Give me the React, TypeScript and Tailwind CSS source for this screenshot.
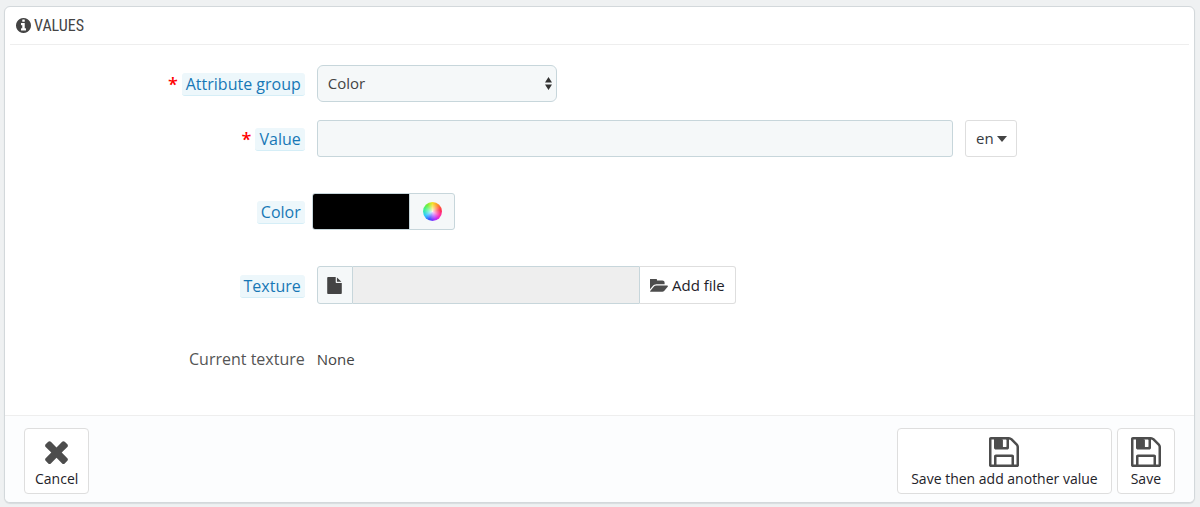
import React, { useState } from 'react';

const InfoIcon = ({ className }: { className: string }) => (
    <svg viewBox="128 128 1536 1536" fill="currentColor" className={className} aria-hidden="true">
        <path d="M1152 1376v-160q0-14-9-23t-23-9h-96v-512q0-14-9-23t-23-9h-320q-14 0-23 9t-9 23v160q0 14 9 23t23 9h96v320h-96q-14 0-23 9t-9 23v160q0 14 9 23t23 9h448q14 0 23-9t9-23zm-128-896v-160q0-14-9-23t-23-9h-192q-14 0-23 9t-9 23v160q0 14 9 23t23 9h192q14 0 23-9t9-23zm640 416q0 209-103 385.5t-279.5 279.5-385.5 103-385.5-103-279.5-279.5-103-385.5 103-385.5 279.5-279.5 385.5-103 385.5 103 279.5 279.5 103 385.5z" />
    </svg>
);

const FileIcon = ({ className }: { className: string }) => (
    <svg viewBox="128 0 1536 1792" fill="currentColor" className={className} aria-hidden="true">
        <path d="M1152 512v-472q22 14 36 28l408 408q14 14 28 36h-472zm-128 32q0 40 28 68t68 28h544v1056q0 40-28 68t-68 28h-1344q-40 0-68-28t-28-68v-1600q0-40 28-68t68-28h800v544z" />
    </svg>
);

const FolderOpenIcon = ({ className }: { className: string }) => (
    <svg viewBox="0 256 1815 1280" fill="currentColor" className={className} aria-hidden="true">
        <path d="M1815 952q0 31-31 66l-336 396q-43 51-120.5 86.5t-143.5 35.5h-1088q-34 0-60.5-13t-26.5-43q0-31 31-66l336-396q43-51 120.5-86.5t143.5-35.5h1088q34 0 60.5 13t26.5 43zm-343-344v160h-832q-94 0-197 47.5t-164 119.5l-337 396-5 6q0-4-.5-12.5t-.5-12.5v-960q0-92 66-158t158-66h320q92 0 158 66t66 158v32h544q92 0 158 66t66 158z" />
    </svg>
);

const CrossIcon = ({ className }: { className: string }) => (
    <svg viewBox="302 302 1188 1252" fill="currentColor" className={className} aria-hidden="true">
        <path d="M1490 1322q0 40-28 68l-136 136q-28 28-68 28t-68-28l-294-294-294 294q-28 28-68 28t-68-28l-136-136q-28-28-28-68t28-68l294-294-294-294q-28-28-28-68t28-68l136-136q28-28 68-28t68 28l294 294 294-294q28-28 68-28t68 28l136 136q28 28 28 68t-28 68l-294 294 294 294q28 28 28 68z" />
    </svg>
);

const SaveIcon = ({ className }: { className: string }) => (
    <svg viewBox="128 128 1536 1536" fill="currentColor" className={className} aria-hidden="true">
        <path d="M512 1536h768v-384h-768v384zm896 0h128v-896q0-14-10-38.5t-20-34.5l-281-281q-10-10-34-20t-39-10v416q0 40-28 68t-68 28h-576q-40 0-68-28t-28-68v-416h-128v1280h128v-416q0-40 28-68t68-28h832q40 0 68 28t28 68v416zm-384-928v-320q0-13-9.5-22.5t-22.5-9.5h-192q-13 0-22.5 9.5t-9.5 22.5v320q0 13 9.5 22.5t22.5 9.5h192q13 0 22.5-9.5t9.5-22.5zm640 32v928q0 40-28 68t-68 28h-1344q-40 0-68-28t-28-68v-1344q0-40 28-68t68-28h928q40 0 88 20t76 48l280 280q28 28 48 76t20 88z" />
        <path d="M540 250h300v400h-300z" />
    </svg>
);

const FormRow = ({
    label,
    htmlFor,
    required,
    children
}: {
    label: string,
    htmlFor: string,
    required?: boolean,
    children: React.ReactNode
}) => {

    return (
        <div className="flex items-center">
            <div className="flex w-1/4 shrink-0 justify-end gap-1 pt-0.5 text-base leading-[22px]">
                {required && <span className="text-lg leading-[22px] font-semibold text-[#ff0000]">*</span>}
                <label htmlFor={htmlFor} className="rounded-[3px] border-b border-[#d5eef7] bg-[#edf7fb] px-1 text-[#1777b6]">
                    {label}
                </label>
            </div>
            {children}
        </div>
    )
}

const FooterButton = ({
    text,
    padding,
    submit,
    children
}: {
    text: string,
    padding: string,
    submit?: boolean,
    children: React.ReactNode
}) => {

    return (
        <button type={submit ? 'submit' : 'button'} className={`flex h-[66px] flex-col items-center justify-between rounded border border-[#dedede] bg-white pt-2 pb-1 text-sm leading-5 text-[#1e2229] hover:bg-gray-50 ${padding}`}>
            <span className="flex h-[30px] items-center text-[#4d4d4d]">{children}</span>
            {text}
        </button>
    )
}

const App = () => {
    const [group, setGroup] = useState('color');
    const [value, setValue] = useState('');
    const [color, setColor] = useState('#000000');

    return (
        <div className="min-h-screen bg-[#eff1f2] pt-1.5 pr-[5px] pb-1 pl-1 font-['Open_Sans',sans-serif] text-[15px] text-[#444444]">
            <form className="overflow-hidden rounded-md border border-[#d3d8db] bg-white shadow-[0_1px_1px_#d8dcde]">
                <h3 className="mx-[5px] flex h-[38px] items-center gap-[3px] border-b border-[#eeeeee] px-1.5 font-['Ubuntu_Condensed','Roboto_Condensed','Open_Sans_Condensed',sans-serif] text-base text-[#444444]">
                    <InfoIcon className="h-[15px] w-[15px]" />
                    VALUES
                </h3>

                <div className="mx-[5px] pt-5 pb-11">
                    <FormRow label="Attribute group" htmlFor="attribute-group" required>
                        <div className="relative ml-3 w-60">
                            <select id="attribute-group" value={group} onChange={(e) => setGroup(e.target.value)} className="block h-[37px] w-full appearance-none rounded-md border border-[#c7d6db] bg-[#f5f8f9] px-[10px] text-[15px] text-[#444444]">
                                <option value="color">Color</option>
                                <option value="size">Size</option>
                            </select>
                            <svg viewBox="0 0 7 13" fill="#333333" className="pointer-events-none absolute top-3 right-[5px] h-[13px] w-[7px]" aria-hidden="true">
                                <path d="M3.5 0 7 5.4H0zM0 7.6h7L3.5 13z" />
                            </svg>
                        </div>
                    </FormRow>

                    <div className="mt-[18px]">
                        <FormRow label="Value" htmlFor="value" required>
                            <input id="value" type="text" value={value} onChange={(e) => setValue(e.target.value)} className="ml-3 h-[37px] w-[54%] rounded-[3px] border border-[#c7d6db] bg-[#f5f8f9] px-2" />
                            <button type="button" className="ml-3 flex h-[37px] w-[52px] items-center justify-center gap-[3px] rounded-[3px] border border-[#dedede] bg-white text-[15px] text-[#363a41]">
                                en
                                <svg viewBox="0 0 10 6" fill="#444444" className="h-1.5 w-[10px]" aria-hidden="true">
                                    <path d="M0 0h10L5 6z" />
                                </svg>
                            </button>
                        </FormRow>
                    </div>

                    <div className="mt-9">
                        <FormRow label="Color" htmlFor="color">
                            <div className="ml-[7px] flex h-[37px] w-[143px] overflow-hidden rounded-[3px] border border-[#c7d6db] bg-[#f5f8f9]">
                                <input id="color" type="text" value={color} onChange={(e) => setColor(e.target.value)} className="w-24 bg-black px-2 text-black" />
                                <button type="button" aria-label="Pick a color" className="flex flex-1 items-center justify-center border-l border-[#c7d6db] pl-0.5">
                                    <span className="h-[19px] w-[19px] rounded-full bg-[radial-gradient(circle,#ffffffdd_0%,#ffffff55_35%,#ffffff00_60%),conic-gradient(#f5e02a,#ff8a2a,#ff2f4f,#ff2fb0,#b52fff,#3f4dff,#2fc8ff,#3cf0a0,#6df03a,#f5e02a)]" />
                                </button>
                            </div>
                        </FormRow>
                    </div>

                    <div className="mt-9">
                        <FormRow label="Texture" htmlFor="texture">
                            <div className="ml-3 flex h-[38px] w-[419px]">
                                <span className="flex w-9 items-center justify-center rounded-l-[3px] border border-[#c7d6db] bg-[#f5f8f9]">
                                    <FileIcon className="h-[17px] w-[15px]" />
                                </span>
                                <input id="texture" type="text" readOnly className="min-w-0 flex-1 border-y border-[#c7d6db] bg-[#eeeeee] px-2" />
                                <button type="button" className="flex items-center gap-1 rounded-r-[3px] border border-[#dedede] border-l-[#c7d6db] bg-white px-[10px] text-[15px] text-[#1e2229]">
                                    <FolderOpenIcon className="h-[13px] w-[18px] text-[#4d4d4d]" />
                                    Add file
                                </button>
                            </div>
                        </FormRow>
                    </div>

                    <div className="mt-[43px] flex items-center leading-6">
                        <span className="w-1/4 text-right text-base text-[#555555]">Current texture</span>
                        <span className="ml-3">None</span>
                    </div>
                </div>

                <div className="flex items-center justify-between border-t border-[#eeeeee] bg-[#fcfdfe] px-[19px] pt-3 pb-2">
                    <FooterButton text="Cancel" padding="px-[10px]">
                        <CrossIcon className="h-6 w-[23px]" />
                    </FooterButton>
                    <div className="flex gap-[5px]">
                        <FooterButton text="Save then add another value" padding="px-[13px]" submit>
                            <SaveIcon className="h-[30px] w-[30px]" />
                        </FooterButton>
                        <FooterButton text="Save" padding="px-[13px]" submit>
                            <SaveIcon className="h-[30px] w-[30px]" />
                        </FooterButton>
                    </div>
                </div>
            </form>
        </div>
    )
}

export default App;
